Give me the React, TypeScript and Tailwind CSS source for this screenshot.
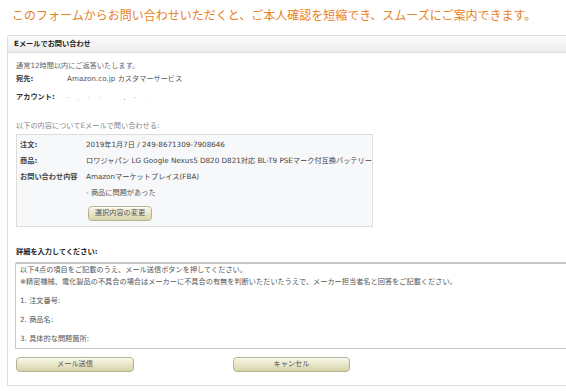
const rows: [string, string][] = [
  ["注文:", "2019年1月7日 / 249-8671309-7908646"],
  ["商品:", "ロワジャパン LG Google Nexus5 D820 D821対応 BL-T9 PSEマーク付互換バッテリー"],
  ["お問い合わせ内容", "Amazonマーケットプレイス(FBA)"],
];

const btn =
  "flex items-center justify-center h-[15px] rounded-[4px] border border-[#b3b18e] bg-gradient-to-b from-[#f8f7e8] to-[#d8d4a9] text-[#555] shadow-[inset_0_1px_0_#fff]";

export default function App() {
  return (
    <div className="w-[566px] h-[391px] overflow-hidden bg-white font-['DejaVu_Sans','Noto_Sans_CJK_JP',sans-serif] text-[7.2px] text-[#555]">
      <div className="pt-[6px] pl-[12px] text-[12px] leading-[18px] text-[#e8821e] whitespace-nowrap font-['Noto_Sans_CJK_JP',sans-serif]">
        このフォームからお問い合わせいただくと、ご本人確認を短縮でき、スムーズにご案内できます。
      </div>

      <div className="mt-[11px] ml-[7px] w-[566px] border border-r-0 border-[#ddd] rounded-tl-[3px]">
        <div className="h-[17px] flex items-center px-[6px] bg-gradient-to-b from-[#fcfcfc] to-[#ebebeb] border-b border-[#ddd] font-bold text-[#222]">
          Eメールでお問い合わせ
        </div>

        <div className="pl-[8px] pb-[13px]">
          <div className="mt-[7px] leading-[12px] text-[#666]">通常12時間以内にご返答いたします。</div>
          <div className="mt-[1px] flex leading-[12px]">
            <span className="w-[51px] font-bold text-[#333]">宛先:</span>
            <span>Amazon.co.jp カスタマーサービス</span>
          </div>
          <div className="mt-[6px] flex items-center leading-[12px]">
            <span className="w-[51px] font-bold text-[#333]">アカウント:</span>
            <span className="flex items-center gap-[9px]">
              <span className="w-[2px] h-[1px] bg-[#dcd6e6]" />
              <span className="w-[1px] h-[1px] mt-[4px] bg-[#c9c9c9]" />
              <span className="w-[2px] h-[1px] bg-[#e6e0d0]" />
              <span className="w-[2px] h-[1px] bg-[#d8e6e6]" />
              <span className="w-[1px] h-[1px] ml-[14px] mt-[4px] bg-[#a0a0a0]" />
              <span className="w-[2px] h-[1px] bg-[#e3d7e8]" />
              <span className="w-[1px] h-[1px] bg-[#d9e8e0]" />
            </span>
          </div>

          <div className="mt-[17px] leading-[12px] text-[#888]">以下の内容についてEメールで問い合わせる:</div>

          <div className="mt-[2px] w-[357px] border border-[#ddd] bg-[#f7f8fa] pl-[3px] pt-[4px] pb-[5px]">
            {rows.map(([label, value], i) => (
              <div key={label} className={`flex leading-[12px] whitespace-nowrap ${i ? "mt-[4px]" : ""}`}>
                <span className="w-[66px] shrink-0 font-bold text-[#444]">{label}</span>
                <span className="text-[#444]">{value}</span>
              </div>
            ))}
            <div className="mt-[4px] ml-[66px] leading-[12px]">- 商品に問題があった</div>
            <div className={`${btn} mt-[7px] ml-[68px] w-[64px] h-[14px] rounded-[3px]`}>選択内容の変更</div>
          </div>

          <div className="mt-[19px] leading-[12px] font-bold text-[#222]">詳細を入力してください:</div>

          <div className="mt-[4px] -ml-[1px] h-[87px] border border-t-2 border-r-0 border-[#c8c8c8] rounded-tl-[2px] pl-[4px] text-[#555]">
            <div className="leading-[12px]">以下4点の項目をご記載のうえ、メール送信ボタンを押してください。</div>
            <div className="leading-[12px] whitespace-nowrap">
              ※精密機械、電化製品の不具合の場合はメーカーに不具合の有無を判断いただいたうえで、メーカー担当者名と回答をご記載ください。
            </div>
            <div className="mt-[7px] leading-[12px]">1. 注文番号:</div>
            <div className="mt-[7px] leading-[12px]">2. 商品名:</div>
            <div className="mt-[7px] leading-[12px]">3. 具体的な問題箇所:</div>
          </div>

          <div className="mt-[8px] flex">
            <div className={`${btn} w-[118px]`}>メール送信</div>
            <div className={`${btn} ml-[99px] w-[117px]`}>キャンセル</div>
          </div>
        </div>
      </div>
    </div>
  );
}
